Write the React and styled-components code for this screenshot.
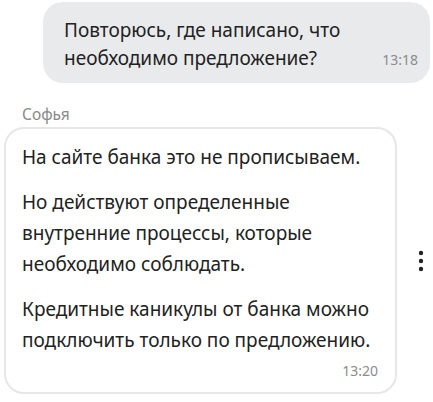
import React from 'react';
import styled, { createGlobalStyle } from 'styled-components';

const Global = createGlobalStyle`
  html, body {
    margin: 0;
    background: #ffffff;
  }
  body {
    font-family: "Noto Sans", "Open Sans", sans-serif;
    color: #222;
  }
`;

const Chat = styled.div`
  width: 433px;
  height: 402px;
  padding-top: 2px;
  box-sizing: border-box;
  overflow: hidden;
`;

const OutRow = styled.div`
  display: flex;
  justify-content: flex-end;
  padding-right: 3px;
`;

const OutBubble = styled.div`
  width: 387px;
  box-sizing: border-box;
  background: #e9eaec;
  border-radius: 20px;
  padding: 14px 12px 9px 21px;
  font-size: 19px;
  line-height: 28px;
  color: #222;
  white-space: nowrap;
`;

const Time = styled.span`
  float: right;
  font-size: 14px;
  color: #8c8c8c;
  margin-top: 2px;
`;

const Author = styled.div`
  margin: 21px 0 0 22px;
  font-size: 15.5px;
  line-height: 20px;
  color: #8a8a8a;
`;

const InRow = styled.div`
  display: flex;
  align-items: center;
  gap: 21px;
  margin: 3px 0 0 4px;
`;

const InBubble = styled.div`
  width: 393px;
  box-sizing: border-box;
  border: 2px solid #e6e7e9;
  border-radius: 20px;
  padding: 13px 17px 11px 16px;
  font-size: 19px;
  line-height: 31px;
  color: #222;
  white-space: nowrap;
`;

const Para = styled.p`
  margin: 0 0 14px;
`;

const Footer = styled.div`
  display: flex;
  justify-content: flex-end;
  font-size: 14px;
  line-height: 20px;
  color: #8c8c8c;
  margin-top: -9px;
`;

const Kebab = () => (
  <svg width="6" height="24" viewBox="0 0 6 24" fill="#222">
    <circle cx="3" cy="4" r="2.2" />
    <circle cx="3" cy="12" r="2.2" />
    <circle cx="3" cy="20" r="2.2" />
  </svg>
);

export default function App() {
  return (
    <Chat>
      <Global />
      <OutRow>
        <OutBubble>
          Повторюсь, где написано, что
          <br />
          необходимо предложение?
          <Time>13:18</Time>
        </OutBubble>
      </OutRow>
      <Author>Софья</Author>
      <InRow>
        <InBubble>
          <Para>На сайте банка это не прописываем.</Para>
          <Para>
            Но действуют определенные
            <br />
            внутренние процессы, которые
            <br />
            необходимо соблюдать.
          </Para>
          <Para>
            Кредитные каникулы от банка можно
            <br />
            подключить только по предложению.
          </Para>
          <Footer>13:20</Footer>
        </InBubble>
        <Kebab />
      </InRow>
    </Chat>
  );
}
